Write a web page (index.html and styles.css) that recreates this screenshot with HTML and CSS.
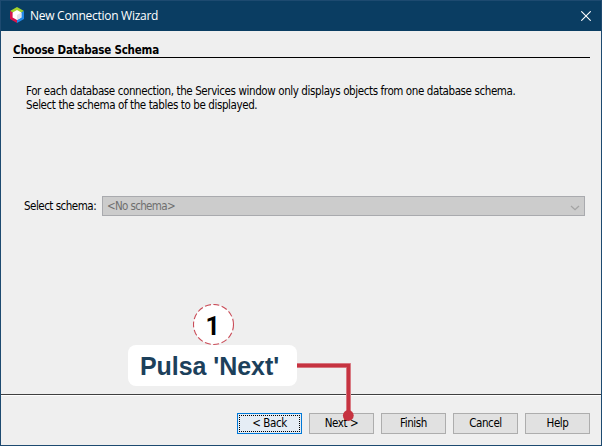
FILE: index.html
```
<!DOCTYPE html>
<html lang="en">
<head>
<meta charset="utf-8">
<title>New Connection Wizard</title>
<link rel="stylesheet" href="styles.css">
</head>
<body>
<div class="window">
  <header class="titlebar">
    <svg class="logo" width="14" height="16" viewBox="0 0 14 16">
      <path fill="#a4d22a" d="M7 0 14 4 7 8 0 4z"/>
      <path fill="#d7144b" d="M0 4 7 8V16L0 12z"/>
      <path fill="#2389e8" d="M14 4 7 8V16L14 12z"/>
      <path fill="#fff" d="M7 3 11.4 5.5V10.5L7 13 2.6 10.5V5.5z"/>
      <path fill="#e3e5e7" d="M7 8 11.4 5.5V10.5L7 13z"/>
    </svg>
    <span class="title">New Connection Wizard</span>
    <svg class="close" width="10" height="10" viewBox="0 0 10 10"><path d="M.3.3 9.7 9.7M9.7.3.3 9.7" stroke="#fff" stroke-width="1.1"/></svg>
  </header>
  <main class="content">
    <h1 class="heading">Choose Database Schema</h1>
    <p class="description">For each database connection, the Services window only displays objects from one database schema.<br>Select the schema of the tables to be displayed.</p>
    <div class="field">
      <span class="label">Select schema:</span>
      <div class="select"><span>&lt;No schema&gt;</span>
        <svg width="10" height="6" viewBox="0 0 10 6"><path d="M1 1 5 4.7 9 1" fill="none" stroke="#a4a4a4" stroke-width="1.3"/></svg>
      </div>
    </div>
  </main>
  <footer class="actions">
    <button class="button focused">&lt; Back</button>
    <button class="button">Next &gt;</button>
    <button class="button">Finish</button>
    <button class="button">Cancel</button>
    <button class="button">Help</button>
  </footer>
</div>
<svg class="connector" width="60" height="63" viewBox="0 0 60 63">
  <path d="M0 7.5H51.5V58" fill="none" stroke="#dc8c94" stroke-width="5"/>
  <path d="M0 7.5H51.5V58" fill="none" stroke="#c63340" stroke-width="3.4"/>
  <circle cx="51.3" cy="57.5" r="5.4" fill="#c63340"/>
</svg>
<svg class="step" width="42" height="42" viewBox="0 0 42 42">
  <circle cx="20.5" cy="20.5" r="20" fill="#fff" stroke="#c94b57" stroke-width="1.1" stroke-dasharray="6 2.5"/>
</svg>
<div class="number">1</div>
<div class="callout">Pulsa 'Next'</div>
</body>
</html>
```
FILE: styles.css
```
* { box-sizing: border-box; }
body {
  margin: 0;
  width: 603px;
  height: 447px;
  overflow: hidden;
  background: #fff;
  font: 11.5px/14px "DejaVu Sans Condensed", "Noto Sans", sans-serif;
  letter-spacing: -0.4px;
  color: #000;
}
.window {
  width: 602px;
  height: 446px;
  border: 1px solid #1d4a70;
  background: #efefef;
  display: flex;
  flex-direction: column;
}
.titlebar {
  height: 30px;
  background: #0a3d62;
  display: flex;
  align-items: center;
  padding: 0 9px;
  color: #fff;
}
.title {
  flex: 1;
  margin-left: 6px;
  font: 12px/16px "Open Sans", sans-serif;
  letter-spacing: -0.27px;
}
.logo { margin-top: -2px; }
.close { margin-right: 1px; }
.content { height: 363px; }
.heading {
  margin: 11px 11px 0 12px;
  height: 16px;
  border-bottom: 1px solid #000;
  font-size: 11.5px;
  line-height: 16px;
  font-weight: bold;
  letter-spacing: -0.2px;
  white-space: nowrap;
}
.description {
  margin: 26px 0 0 25px;
  white-space: nowrap;
}
.field {
  margin: 84px 0 0 23px;
  display: flex;
  align-items: center;
}
.label {
  width: 78px;
  letter-spacing: -0.5px;
  white-space: nowrap;
}
.select {
  width: 483px;
  height: 20px;
  border: 1px solid #a9aaae;
  background: #ccc;
  color: #6f6f6f;
  letter-spacing: -0.65px;
  display: flex;
  align-items: center;
  justify-content: space-between;
  padding: 0 4px;
}
.select svg { margin-top: 4px; }
.actions {
  flex: 1;
  border-top: 1px solid #404040;
  box-shadow: inset 0 1px #fff;
  display: flex;
  justify-content: flex-end;
  gap: 7px;
  padding: 18px 11px 0 0;
}
.button {
  width: 65px;
  height: 21px;
  padding: 0 0 1px;
  border: 1px solid #adadad;
  background: #e1e1e1;
  font: inherit;
  letter-spacing: inherit;
  color: #000;
}
.button.focused {
  border-color: #0078d7;
  background: #e5edf5;
  outline: 1px dotted #000;
  outline-offset: -3px;
}
.connector { position: absolute; left: 297px; top: 358px; }
.step { position: absolute; left: 193px; top: 304px; }
.number {
  position: absolute;
  left: 193px;
  top: 313px;
  width: 39px;
  text-align: center;
  font: bold 25px/28px Roboto, sans-serif;
}
.callout {
  position: absolute;
  left: 128px;
  top: 345px;
  width: 169px;
  height: 41px;
  padding-left: 12px;
  border-radius: 8px;
  background: #fff;
  color: #1c405b;
  font: bold 25px/42px "Liberation Sans", sans-serif;
  letter-spacing: -0.05px;
  white-space: nowrap;
}
```
